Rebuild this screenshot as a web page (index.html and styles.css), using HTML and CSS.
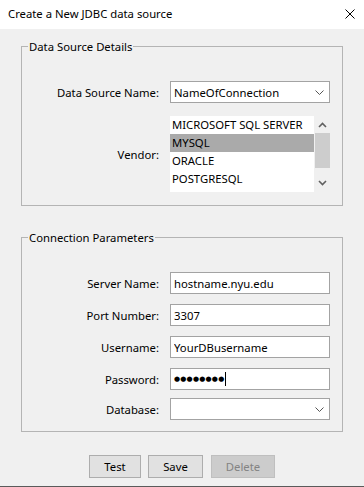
FILE: index.html
```html
<!doctype html>
<html lang="en">
<head>
  <meta charset="UTF-8">
  <meta name="viewport" content="width=device-width, initial-scale=1.0">
  <title>Create a New JDBC data source</title>
  <link rel="stylesheet" href="styles.css">
</head>
<body>
  <div class="window">
    <div class="titlebar">
      <span class="title">Create a New JDBC data source</span>
      <svg class="close" width="10" height="10" viewBox="0 0 10 10">
        <path d="M0.5 0.5 L9.5 9.5 M9.5 0.5 L0.5 9.5" stroke="#000" stroke-width="1"/>
      </svg>
    </div>

    <div class="content">
      <fieldset class="group group-details">
        <legend>Data Source Details</legend>

        <div class="form-row">
          <label for="dsName">Data Source Name:</label>
          <div class="combo">
            <span class="combo-value">NameOfConnection</span>
            <svg class="chevron" width="9" height="5" viewBox="0 0 9 5">
              <path d="M0.5 0.5 L4.5 4.5 L8.5 0.5" fill="none" stroke="#555" stroke-width="1"/>
            </svg>
          </div>
        </div>

        <div class="form-row vendor-row">
          <label>Vendor:</label>
          <div class="listbox">
            <ul class="list-items">
              <li>MICROSOFT SQL SERVER</li>
              <li class="selected">MYSQL</li>
              <li>ORACLE</li>
              <li>POSTGRESQL</li>
            </ul>
            <div class="scrollbar">
              <svg class="arrow" width="9" height="6" viewBox="0 0 9 6">
                <path d="M1 5 L4.5 1.5 L8 5" fill="none" stroke="#606060" stroke-width="1.6"/>
              </svg>
              <div class="track"><div class="thumb"></div></div>
              <svg class="arrow" width="9" height="6" viewBox="0 0 9 6">
                <path d="M1 1 L4.5 4.5 L8 1" fill="none" stroke="#606060" stroke-width="1.6"/>
              </svg>
            </div>
          </div>
        </div>
      </fieldset>

      <fieldset class="group group-params">
        <legend>Connection Parameters</legend>

        <div class="form-row">
          <label for="serverName">Server Name:</label>
          <input type="text" id="serverName" value="hostname.nyu.edu">
        </div>
        <div class="form-row">
          <label for="portNumber">Port Number:</label>
          <input type="text" id="portNumber" value="3307">
        </div>
        <div class="form-row">
          <label for="username">Username:</label>
          <input type="text" id="username" value="YourDBusername">
        </div>
        <div class="form-row">
          <label>Password:</label>
          <div class="password-box"><span class="dots">&#9679;&#9679;&#9679;&#9679;&#9679;&#9679;&#9679;&#9679;</span><span class="caret"></span></div>
        </div>
        <div class="form-row db-row">
          <label>Database:</label>
          <div class="combo">
            <span class="combo-value"></span>
            <svg class="chevron" width="9" height="5" viewBox="0 0 9 5">
              <path d="M0.5 0.5 L4.5 4.5 L8.5 0.5" fill="none" stroke="#555" stroke-width="1"/>
            </svg>
          </div>
        </div>
      </fieldset>

      <div class="buttons">
        <button class="btn btn-test">Test</button>
        <button class="btn btn-save">Save</button>
        <button class="btn btn-delete" disabled>Delete</button>
      </div>
    </div>
  </div>
</body>
</html>
```

FILE: styles.css
```css
* {
  box-sizing: border-box;
}

body {
  margin: 0;
  padding: 0;
  font-family: 'Noto Sans', 'Liberation Sans', Arial, sans-serif;
  font-size: 11.3px;
  color: #000;
  background: #f0f0f0;
}

.window {
  width: 364px;
  height: 487px;
  background: #f0f0f0;
  border-bottom: 1px solid #5a5a5a;
  overflow: hidden;
}

.titlebar {
  height: 29px;
  background: #fff;
  display: flex;
  align-items: center;
  justify-content: space-between;
  padding: 0 9px 0 8px;
}

.title {
  font-size: 11.3px;
  margin-top: -2px;
}

.close {
  display: block;
  margin-top: -1px;
}

.content {
  padding: 10px 21px 0 21px;
}

.group {
  margin: 0;
  border: 1px solid #b4b4b4;
  padding: 0 12px 0 12px;
  min-width: 0;
}

.group legend {
  margin-left: -6px;
  padding: 0 1px;
  line-height: 15px;
}

.group-details {
  padding-top: 27px;
  padding-bottom: 13px;
}

.group-params {
  margin-top: 24px;
  padding-top: 27px;
  padding-bottom: 11px;
}

.form-row {
  display: grid;
  grid-template-columns: 1fr 160px;
  column-gap: 11px;
  align-items: center;
  margin-bottom: 10px;
}

.form-row:last-child {
  margin-bottom: 0;
}

.form-row label {
  text-align: right;
  white-space: nowrap;
}

.vendor-row {
  margin-top: 13px;
}

.db-row {
  margin-top: -2px;
}

input[type="text"],
.password-box,
.combo {
  width: 160px;
  height: 22px;
  border: 1px solid #a3a3a3;
  background: #fff;
  font-family: inherit;
  font-size: 11.3px;
  padding: 0 3px;
  margin: 0;
  color: #000;
  outline: none;
}

.combo {
  display: flex;
  align-items: center;
  justify-content: space-between;
  padding: 0 4px 0 3px;
}

.chevron {
  display: block;
  margin-right: 1px;
}

.password-box {
  display: flex;
  align-items: center;
}

.dots {
  font-family: 'DejaVu Sans', sans-serif;
  font-size: 7px;
  letter-spacing: 0.2px;
}

.caret {
  display: inline-block;
  width: 1px;
  height: 14px;
  background: #000;
  margin-left: 1px;
}

.listbox {
  display: flex;
  width: 160px;
  height: 76px;
  background: #fff;
}

.list-items {
  list-style: none;
  margin: 0;
  padding: 0;
  flex: 1;
}

.list-items li {
  height: 18px;
  line-height: 18px;
  padding-left: 2px;
  white-space: nowrap;
}

.list-items li.selected {
  background: #aaaaaa;
}

.scrollbar {
  width: 16px;
  background: #f0f0f0;
  display: flex;
  flex-direction: column;
  align-items: center;
  justify-content: space-between;
  padding: 6px 0 6px;
}

.track {
  flex: 1;
  width: 15px;
  padding-top: 5px;
}

.thumb {
  height: 35px;
  background: #cdcdcd;
}

.arrow {
  display: block;
}

.buttons {
  display: flex;
  justify-content: center;
  gap: 7px;
  margin-top: 23px;
}

.btn {
  height: 23px;
  border: 1px solid #adadad;
  background: #e1e1e1;
  font-family: inherit;
  font-size: 11.3px;
  color: #000;
  padding: 0;
}

.btn-test {
  width: 52px;
}

.btn-save {
  width: 55px;
  margin-right: 1px;
}

.btn-delete {
  width: 64px;
  background: #cccccc;
  border-color: #bfbfbf;
  color: #838383;
}
```
